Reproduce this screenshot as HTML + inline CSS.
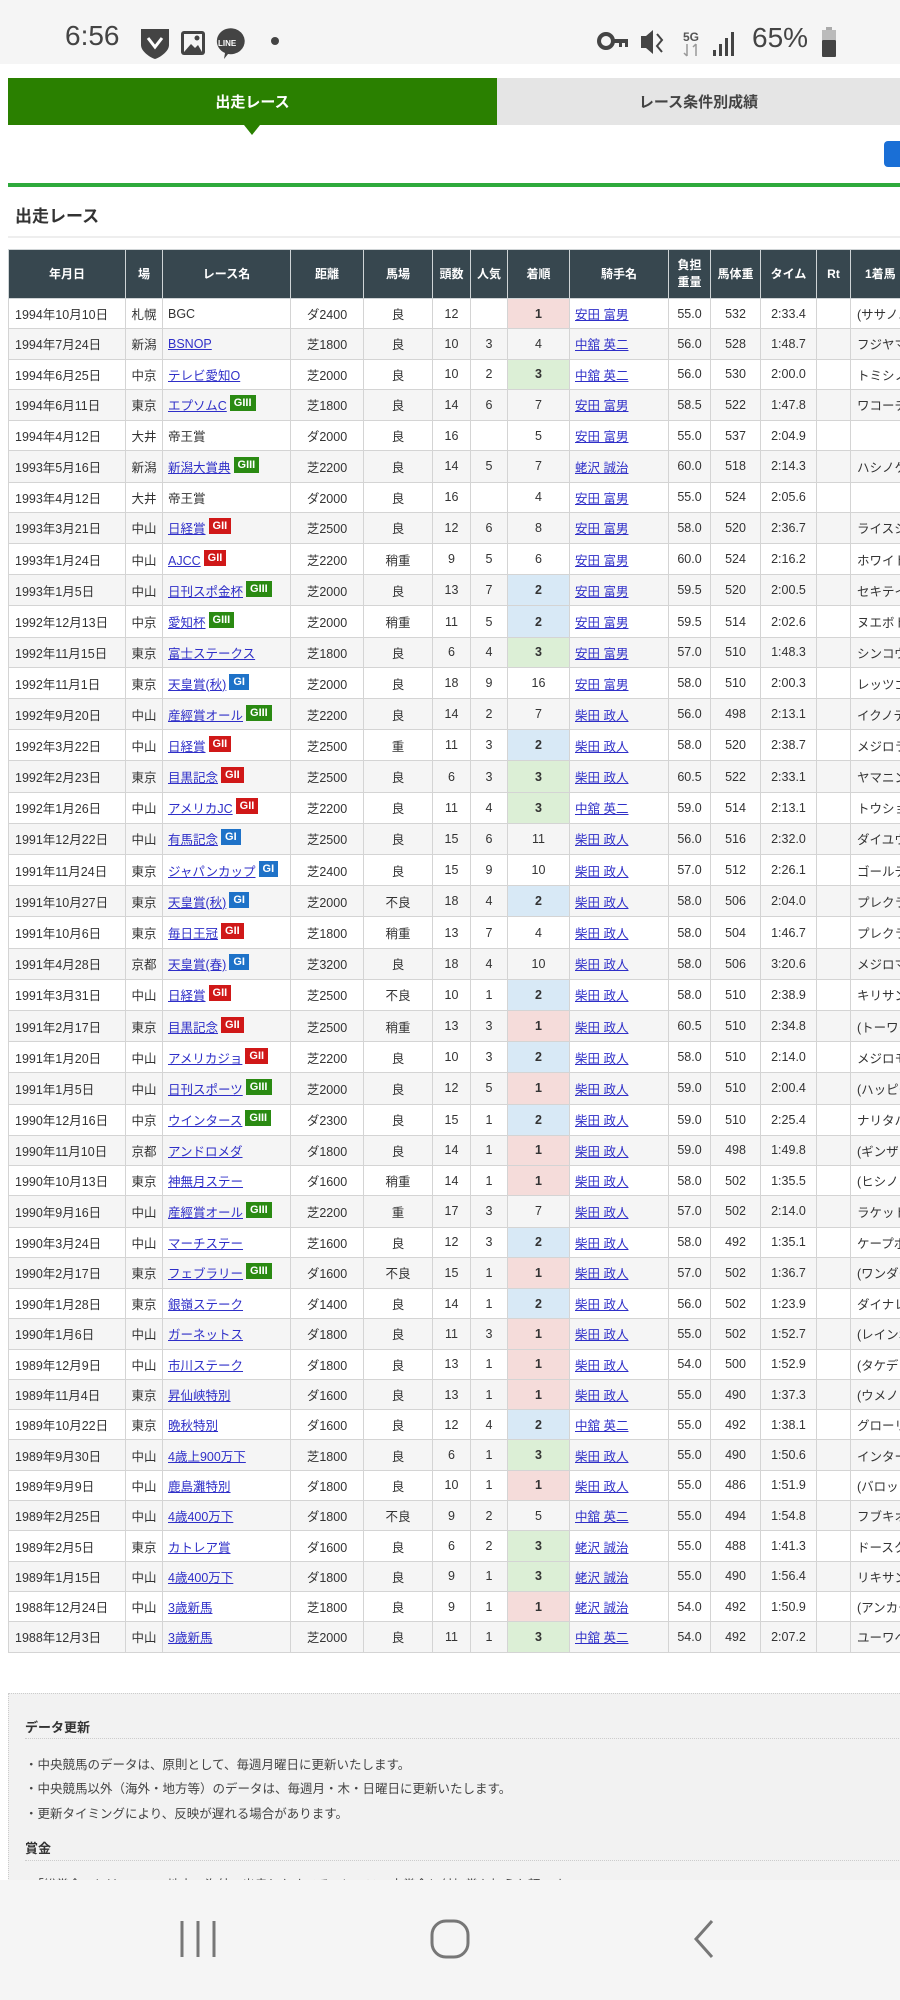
<!DOCTYPE html>
<html><head><meta charset="utf-8">
<style>
*{margin:0;padding:0;box-sizing:border-box}
body{width:900px;height:2000px;overflow:hidden;background:#fff;font-family:"Liberation Sans","Noto Sans CJK JP",sans-serif;color:#333;position:relative}
.sb{position:absolute;left:0;top:0;width:900px;height:64px;background:#f5f5f5}
.tabs{position:absolute;left:8px;top:78px;width:892px;height:47px;display:flex}
.t1{width:489px;background:#2a8000;color:#fff;font-weight:bold;font-size:15px;display:flex;align-items:center;justify-content:center;position:relative}
.t1:after{content:"";position:absolute;left:236px;bottom:-10px;border-left:8px solid transparent;border-right:8px solid transparent;border-top:10px solid #2a8000}
.t2{flex:1;background:#e5e5e5;color:#444;font-weight:bold;font-size:15px;display:flex;align-items:center;justify-content:center}
.btn{position:absolute;left:884px;top:141px;width:30px;height:26px;background:#1a6fd6;border-radius:4px}
.gl{position:absolute;left:8px;top:183px;width:892px;height:4px;background:#2eaa3c}
h2{position:absolute;left:15px;top:202px;font-size:17px;font-weight:bold;color:#333}
.fl{position:absolute;left:8px;top:236px;width:892px;height:2px;background:#eee}
table{position:absolute;left:8px;top:249px;border-collapse:collapse;table-layout:fixed;width:962px;font-size:12.5px}
th{background:#37474f;color:#fff;font-weight:bold;font-size:12px;height:49px;border:1px solid #cfd4d6;text-align:center;line-height:17px}
td{border:1px solid #d4d4d4;height:30.3px;padding:0 2px;text-align:center;white-space:nowrap;overflow:hidden}
tr.b td{height:31.2px}
tbody tr:nth-child(even) td{background:#f5f5f5}
td:nth-child(1){text-align:left;padding-left:6px}
td:nth-child(3){text-align:left;padding-left:5px}
td:nth-child(9){text-align:left;padding-left:5px}
td:nth-child(14){text-align:left;padding-left:6px}
a{color:#2f2fc8;text-decoration:underline}
tbody tr td.p1{background:#f5dcda!important;font-weight:bold}
tbody tr td.p2{background:#d8e9f6!important;font-weight:bold}
tbody tr td.p3{background:#dcefd6!important;font-weight:bold}
i{font-style:normal;display:inline-block;color:#fff;font-weight:bold;font-size:11px;padding:0 4px;height:16px;line-height:16px;vertical-align:4px;margin-left:3px}
i.g3{background:#2a8a12}i.g2{background:#d01818}i.g1{background:#1e72c8}
.ft{position:absolute;left:8px;top:1693px;width:900px;height:200px;background:#f2f2f2;border:1px dotted #ccc}
.ft h3{position:absolute;left:16px;font-size:13px;font-weight:bold;color:#333}
.ft .ln{position:absolute;left:16px;width:880px;border-top:1px dotted #ccc}
.ft p{position:absolute;left:16px;font-size:12.5px;color:#444}
.nav{position:absolute;left:0;top:1880px;width:900px;height:120px;background:#f5f5f5}
</style></head><body>
<div class="sb">
<span style="position:absolute;left:65px;top:20px;font-size:28px;color:#444">6:56</span>
<svg style="position:absolute;left:139px;top:26px" width="120" height="34" viewBox="0 0 120 34">
<path d="M2 3h28v16c0 6-8 12-14 14C10 31 2 25 2 19z" fill="#444"/><path d="M9 12l7 9 7-9" stroke="#fff" stroke-width="3" fill="none"/>
<rect x="42" y="5" width="24" height="24" rx="3" fill="#444"/><rect x="45" y="8" width="18" height="18" fill="#f5f5f5"/><path d="M45 26l7-8 4 4 3-3 4 7z" fill="#444"/><circle cx="58" cy="12" r="2.5" fill="#444"/>
<path d="M87 3a14 13 0 1 1 2 25l-4 5 1-6A14 13 0 0 1 87 3z" fill="#444"/><text x="79" y="20" font-size="8" font-weight="bold" fill="#fff" font-family="Liberation Sans">LINE</text>
</svg>
<svg style="position:absolute;left:270px;top:36px" width="10" height="10"><circle cx="5" cy="5" r="4" fill="#444"/></svg>
<svg style="position:absolute;left:597px;top:26px" width="240" height="34" viewBox="0 0 240 34">
<circle cx="9" cy="15" r="7" stroke="#444" stroke-width="4" fill="none"/><path d="M16 13h15v8h-3v-4h-3v4h-3v-4h-6z" fill="#444"/>
<path d="M44 10h5l7-6v24l-7-6h-5z" fill="#444"/><path d="M60 8l5 6-5 6 5 6" stroke="#444" stroke-width="2" fill="none"/>
<text x="86" y="15" font-size="12" font-weight="bold" fill="#555" font-family="Liberation Sans">5G</text><path d="M90 18v12M87 27l3 3M99 30V18M96 21l3-3" stroke="#999" stroke-width="1.5"/>
<rect x="116" y="24" width="3" height="6" fill="#444"/><rect x="122" y="18" width="3" height="12" fill="#444"/><rect x="128" y="12" width="3" height="18" fill="#444"/><rect x="134" y="6" width="3" height="24" fill="#444"/>
</svg>
<span style="position:absolute;left:752px;top:22px;font-size:28px;color:#444">65%</span>
<svg style="position:absolute;left:821px;top:26px" width="16" height="34"><rect x="5" y="1" width="6" height="4" fill="#aaa"/><rect x="1" y="4" width="14" height="10" fill="#bbb"/><rect x="1" y="14" width="14" height="17" rx="1" fill="#444"/></svg>
</div>
<div class="tabs"><div class="t1">出走レース</div><div class="t2">レース条件別成績</div></div>
<div class="btn"></div>
<div class="gl"></div>
<h2>出走レース</h2>
<div class="fl"></div>
<table>
<colgroup><col style="width:117px"><col style="width:37px"><col style="width:128px"><col style="width:73px"><col style="width:69px"><col style="width:38px"><col style="width:37px"><col style="width:62px"><col style="width:99px"><col style="width:42px"><col style="width:50px"><col style="width:56px"><col style="width:34px"><col style="width:120px"></colgroup>
<thead><tr><th>年月日</th><th>場</th><th>レース名</th><th>距離</th><th>馬場</th><th>頭数</th><th>人気</th><th>着順</th><th>騎手名</th><th>負担<br>重量</th><th>馬体重</th><th>タイム</th><th>Rt</th><th style="text-align:left;padding-left:14px">1着馬</th></tr></thead>
<tbody>
<tr><td>1994年10月10日</td><td>札幌</td><td>BGC</td><td>ダ2400</td><td>良</td><td>12</td><td></td><td class="p1">1</td><td><a>安田 富男</a></td><td>55.0</td><td>532</td><td>2:33.4</td><td></td><td>(ササノニ</td></tr>
<tr><td>1994年7月24日</td><td>新潟</td><td><a>BSNOP</a></td><td>芝1800</td><td>良</td><td>10</td><td>3</td><td>4</td><td><a>中舘 英二</a></td><td>56.0</td><td>528</td><td>1:48.7</td><td></td><td>フジヤマケ</td></tr>
<tr><td>1994年6月25日</td><td>中京</td><td><a>テレビ愛知O</a></td><td>芝2000</td><td>良</td><td>10</td><td>2</td><td class="p3">3</td><td><a>中舘 英二</a></td><td>56.0</td><td>530</td><td>2:00.0</td><td></td><td>トミシノポ</td></tr>
<tr class="b"><td>1994年6月11日</td><td>東京</td><td><a>エプソムC</a><i class="g3">GIII</i></td><td>芝1800</td><td>良</td><td>14</td><td>6</td><td>7</td><td><a>安田 富男</a></td><td>58.5</td><td>522</td><td>1:47.8</td><td></td><td>ワコーチカ</td></tr>
<tr><td>1994年4月12日</td><td>大井</td><td>帝王賞</td><td>ダ2000</td><td>良</td><td>16</td><td></td><td>5</td><td><a>安田 富男</a></td><td>55.0</td><td>537</td><td>2:04.9</td><td></td><td></td></tr>
<tr class="b"><td>1993年5月16日</td><td>新潟</td><td><a>新潟大賞典</a><i class="g3">GIII</i></td><td>芝2200</td><td>良</td><td>14</td><td>5</td><td>7</td><td><a>蛯沢 誠治</a></td><td>60.0</td><td>518</td><td>2:14.3</td><td></td><td>ハシノケン</td></tr>
<tr><td>1993年4月12日</td><td>大井</td><td>帝王賞</td><td>ダ2000</td><td>良</td><td>16</td><td></td><td>4</td><td><a>安田 富男</a></td><td>55.0</td><td>524</td><td>2:05.6</td><td></td><td></td></tr>
<tr class="b"><td>1993年3月21日</td><td>中山</td><td><a>日経賞</a><i class="g2">GII</i></td><td>芝2500</td><td>良</td><td>12</td><td>6</td><td>8</td><td><a>安田 富男</a></td><td>58.0</td><td>520</td><td>2:36.7</td><td></td><td>ライスシャ</td></tr>
<tr class="b"><td>1993年1月24日</td><td>中山</td><td><a>AJCC</a><i class="g2">GII</i></td><td>芝2200</td><td>稍重</td><td>9</td><td>5</td><td>6</td><td><a>安田 富男</a></td><td>60.0</td><td>524</td><td>2:16.2</td><td></td><td>ホワイトス</td></tr>
<tr class="b"><td>1993年1月5日</td><td>中山</td><td><a>日刊スポ金杯</a><i class="g3">GIII</i></td><td>芝2000</td><td>良</td><td>13</td><td>7</td><td class="p2">2</td><td><a>安田 富男</a></td><td>59.5</td><td>520</td><td>2:00.5</td><td></td><td>セキテイリ</td></tr>
<tr class="b"><td>1992年12月13日</td><td>中京</td><td><a>愛知杯</a><i class="g3">GIII</i></td><td>芝2000</td><td>稍重</td><td>11</td><td>5</td><td class="p2">2</td><td><a>安田 富男</a></td><td>59.5</td><td>514</td><td>2:02.6</td><td></td><td>ヌエボトウ</td></tr>
<tr><td>1992年11月15日</td><td>東京</td><td><a>富士ステークス</a></td><td>芝1800</td><td>良</td><td>6</td><td>4</td><td class="p3">3</td><td><a>安田 富男</a></td><td>57.0</td><td>510</td><td>1:48.3</td><td></td><td>シンコウラ</td></tr>
<tr class="b"><td>1992年11月1日</td><td>東京</td><td><a>天皇賞(秋)</a><i class="g1">GI</i></td><td>芝2000</td><td>良</td><td>18</td><td>9</td><td>16</td><td><a>安田 富男</a></td><td>58.0</td><td>510</td><td>2:00.3</td><td></td><td>レッツゴー</td></tr>
<tr class="b"><td>1992年9月20日</td><td>中山</td><td><a>産經賞オール</a><i class="g3">GIII</i></td><td>芝2200</td><td>良</td><td>14</td><td>2</td><td>7</td><td><a>柴田 政人</a></td><td>56.0</td><td>498</td><td>2:13.1</td><td></td><td>イクノディ</td></tr>
<tr class="b"><td>1992年3月22日</td><td>中山</td><td><a>日経賞</a><i class="g2">GII</i></td><td>芝2500</td><td>重</td><td>11</td><td>3</td><td class="p2">2</td><td><a>柴田 政人</a></td><td>58.0</td><td>520</td><td>2:38.7</td><td></td><td>メジロライ</td></tr>
<tr class="b"><td>1992年2月23日</td><td>東京</td><td><a>目黒記念</a><i class="g2">GII</i></td><td>芝2500</td><td>良</td><td>6</td><td>3</td><td class="p3">3</td><td><a>柴田 政人</a></td><td>60.5</td><td>522</td><td>2:33.1</td><td></td><td>ヤマニング</td></tr>
<tr class="b"><td>1992年1月26日</td><td>中山</td><td><a>アメリカJC</a><i class="g2">GII</i></td><td>芝2200</td><td>良</td><td>11</td><td>4</td><td class="p3">3</td><td><a>中舘 英二</a></td><td>59.0</td><td>514</td><td>2:13.1</td><td></td><td>トウショウ</td></tr>
<tr class="b"><td>1991年12月22日</td><td>中山</td><td><a>有馬記念</a><i class="g1">GI</i></td><td>芝2500</td><td>良</td><td>15</td><td>6</td><td>11</td><td><a>柴田 政人</a></td><td>56.0</td><td>516</td><td>2:32.0</td><td></td><td>ダイユウサ</td></tr>
<tr class="b"><td>1991年11月24日</td><td>東京</td><td><a>ジャパンカップ</a><i class="g1">GI</i></td><td>芝2400</td><td>良</td><td>15</td><td>9</td><td>10</td><td><a>柴田 政人</a></td><td>57.0</td><td>512</td><td>2:26.1</td><td></td><td>ゴールデン</td></tr>
<tr class="b"><td>1991年10月27日</td><td>東京</td><td><a>天皇賞(秋)</a><i class="g1">GI</i></td><td>芝2000</td><td>不良</td><td>18</td><td>4</td><td class="p2">2</td><td><a>柴田 政人</a></td><td>58.0</td><td>506</td><td>2:04.0</td><td></td><td>プレクラス</td></tr>
<tr class="b"><td>1991年10月6日</td><td>東京</td><td><a>毎日王冠</a><i class="g2">GII</i></td><td>芝1800</td><td>稍重</td><td>13</td><td>7</td><td>4</td><td><a>柴田 政人</a></td><td>58.0</td><td>504</td><td>1:46.7</td><td></td><td>プレクラス</td></tr>
<tr class="b"><td>1991年4月28日</td><td>京都</td><td><a>天皇賞(春)</a><i class="g1">GI</i></td><td>芝3200</td><td>良</td><td>18</td><td>4</td><td>10</td><td><a>柴田 政人</a></td><td>58.0</td><td>506</td><td>3:20.6</td><td></td><td>メジロマッ</td></tr>
<tr class="b"><td>1991年3月31日</td><td>中山</td><td><a>日経賞</a><i class="g2">GII</i></td><td>芝2500</td><td>不良</td><td>10</td><td>1</td><td class="p2">2</td><td><a>柴田 政人</a></td><td>58.0</td><td>510</td><td>2:38.9</td><td></td><td>キリサンシ</td></tr>
<tr class="b"><td>1991年2月17日</td><td>東京</td><td><a>目黒記念</a><i class="g2">GII</i></td><td>芝2500</td><td>稍重</td><td>13</td><td>3</td><td class="p1">1</td><td><a>柴田 政人</a></td><td>60.5</td><td>510</td><td>2:34.8</td><td></td><td>(トーワタ</td></tr>
<tr class="b"><td>1991年1月20日</td><td>中山</td><td><a>アメリカジョ</a><i class="g2">GII</i></td><td>芝2200</td><td>良</td><td>10</td><td>3</td><td class="p2">2</td><td><a>柴田 政人</a></td><td>58.0</td><td>510</td><td>2:14.0</td><td></td><td>メジロモン</td></tr>
<tr class="b"><td>1991年1月5日</td><td>中山</td><td><a>日刊スポーツ</a><i class="g3">GIII</i></td><td>芝2000</td><td>良</td><td>12</td><td>5</td><td class="p1">1</td><td><a>柴田 政人</a></td><td>59.0</td><td>510</td><td>2:00.4</td><td></td><td>(ハッピー</td></tr>
<tr class="b"><td>1990年12月16日</td><td>中京</td><td><a>ウインタース</a><i class="g3">GIII</i></td><td>ダ2300</td><td>良</td><td>15</td><td>1</td><td class="p2">2</td><td><a>柴田 政人</a></td><td>59.0</td><td>510</td><td>2:25.4</td><td></td><td>ナリタハヤ</td></tr>
<tr><td>1990年11月10日</td><td>京都</td><td><a>アンドロメダ</a></td><td>ダ1800</td><td>良</td><td>14</td><td>1</td><td class="p1">1</td><td><a>柴田 政人</a></td><td>59.0</td><td>498</td><td>1:49.8</td><td></td><td>(ギンザロ</td></tr>
<tr><td>1990年10月13日</td><td>東京</td><td><a>神無月ステー</a></td><td>ダ1600</td><td>稍重</td><td>14</td><td>1</td><td class="p1">1</td><td><a>柴田 政人</a></td><td>58.0</td><td>502</td><td>1:35.5</td><td></td><td>(ヒシノス</td></tr>
<tr class="b"><td>1990年9月16日</td><td>中山</td><td><a>産經賞オール</a><i class="g3">GIII</i></td><td>芝2200</td><td>重</td><td>17</td><td>3</td><td>7</td><td><a>柴田 政人</a></td><td>57.0</td><td>502</td><td>2:14.0</td><td></td><td>ラケットボ</td></tr>
<tr><td>1990年3月24日</td><td>中山</td><td><a>マーチステー</a></td><td>芝1600</td><td>良</td><td>12</td><td>3</td><td class="p2">2</td><td><a>柴田 政人</a></td><td>58.0</td><td>492</td><td>1:35.1</td><td></td><td>ケープボー</td></tr>
<tr class="b"><td>1990年2月17日</td><td>東京</td><td><a>フェブラリー</a><i class="g3">GIII</i></td><td>ダ1600</td><td>不良</td><td>15</td><td>1</td><td class="p1">1</td><td><a>柴田 政人</a></td><td>57.0</td><td>502</td><td>1:36.7</td><td></td><td>(ワンダー</td></tr>
<tr><td>1990年1月28日</td><td>東京</td><td><a>銀嶺ステーク</a></td><td>ダ1400</td><td>良</td><td>14</td><td>1</td><td class="p2">2</td><td><a>柴田 政人</a></td><td>56.0</td><td>502</td><td>1:23.9</td><td></td><td>ダイナレタ</td></tr>
<tr><td>1990年1月6日</td><td>中山</td><td><a>ガーネットス</a></td><td>ダ1800</td><td>良</td><td>11</td><td>3</td><td class="p1">1</td><td><a>柴田 政人</a></td><td>55.0</td><td>502</td><td>1:52.7</td><td></td><td>(レインボ</td></tr>
<tr><td>1989年12月9日</td><td>中山</td><td><a>市川ステーク</a></td><td>ダ1800</td><td>良</td><td>13</td><td>1</td><td class="p1">1</td><td><a>柴田 政人</a></td><td>54.0</td><td>500</td><td>1:52.9</td><td></td><td>(タケデン</td></tr>
<tr><td>1989年11月4日</td><td>東京</td><td><a>昇仙峡特別</a></td><td>ダ1600</td><td>良</td><td>13</td><td>1</td><td class="p1">1</td><td><a>柴田 政人</a></td><td>55.0</td><td>490</td><td>1:37.3</td><td></td><td>(ウメノア</td></tr>
<tr><td>1989年10月22日</td><td>東京</td><td><a>晩秋特別</a></td><td>ダ1600</td><td>良</td><td>12</td><td>4</td><td class="p2">2</td><td><a>中舘 英二</a></td><td>55.0</td><td>492</td><td>1:38.1</td><td></td><td>グローリー</td></tr>
<tr><td>1989年9月30日</td><td>中山</td><td><a>4歳上900万下</a></td><td>芝1800</td><td>良</td><td>6</td><td>1</td><td class="p3">3</td><td><a>柴田 政人</a></td><td>55.0</td><td>490</td><td>1:50.6</td><td></td><td>インターア</td></tr>
<tr><td>1989年9月9日</td><td>中山</td><td><a>鹿島灘特別</a></td><td>ダ1800</td><td>良</td><td>10</td><td>1</td><td class="p1">1</td><td><a>柴田 政人</a></td><td>55.0</td><td>486</td><td>1:51.9</td><td></td><td>(バロック</td></tr>
<tr><td>1989年2月25日</td><td>中山</td><td><a>4歳400万下</a></td><td>ダ1800</td><td>不良</td><td>9</td><td>2</td><td>5</td><td><a>中舘 英二</a></td><td>55.0</td><td>494</td><td>1:54.8</td><td></td><td>フブキオー</td></tr>
<tr><td>1989年2月5日</td><td>東京</td><td><a>カトレア賞</a></td><td>ダ1600</td><td>良</td><td>6</td><td>2</td><td class="p3">3</td><td><a>蛯沢 誠治</a></td><td>55.0</td><td>488</td><td>1:41.3</td><td></td><td>ドースクダ</td></tr>
<tr><td>1989年1月15日</td><td>中山</td><td><a>4歳400万下</a></td><td>ダ1800</td><td>良</td><td>9</td><td>1</td><td class="p3">3</td><td><a>蛯沢 誠治</a></td><td>55.0</td><td>490</td><td>1:56.4</td><td></td><td>リキサンロ</td></tr>
<tr><td>1988年12月24日</td><td>中山</td><td><a>3歳新馬</a></td><td>芝1800</td><td>良</td><td>9</td><td>1</td><td class="p1">1</td><td><a>蛯沢 誠治</a></td><td>54.0</td><td>492</td><td>1:50.9</td><td></td><td>(アンカー</td></tr>
<tr><td>1988年12月3日</td><td>中山</td><td><a>3歳新馬</a></td><td>芝2000</td><td>良</td><td>11</td><td>1</td><td class="p3">3</td><td><a>中舘 英二</a></td><td>54.0</td><td>492</td><td>2:07.2</td><td></td><td>ユーワベガ</td></tr>
</tbody></table>
<div class="ft">
<h3 style="top:23px">データ更新</h3><div class="ln" style="top:44px"></div>
<p style="top:60px">・中央競馬のデータは、原則として、毎週月曜日に更新いたします。</p>
<p style="top:84px">・中央競馬以外（海外・地方等）のデータは、毎週月・木・日曜日に更新いたします。</p>
<p style="top:109px">・更新タイミングにより、反映が遅れる場合があります。</p>
<h3 style="top:144px">賞金</h3><div class="ln" style="top:166px"></div>
<p style="top:180px">・「総賞金」とは、JRA・地方・海外で出走したすべてのレースの本賞金と付加賞を加えた額です。</p>
</div>
<div class="nav">
<svg style="position:absolute;left:178px;top:39px" width="40" height="40"><path d="M4 2v36M20 2v36M36 2v36" stroke="#777" stroke-width="3"/></svg>
<svg style="position:absolute;left:428px;top:39px" width="44" height="40"><rect x="4" y="2" width="36" height="36" rx="14" stroke="#777" stroke-width="3" fill="none"/></svg>
<svg style="position:absolute;left:690px;top:39px" width="26" height="40"><path d="M22 2L6 20l16 18" stroke="#777" stroke-width="3" fill="none"/></svg>
</div>
</body></html>
